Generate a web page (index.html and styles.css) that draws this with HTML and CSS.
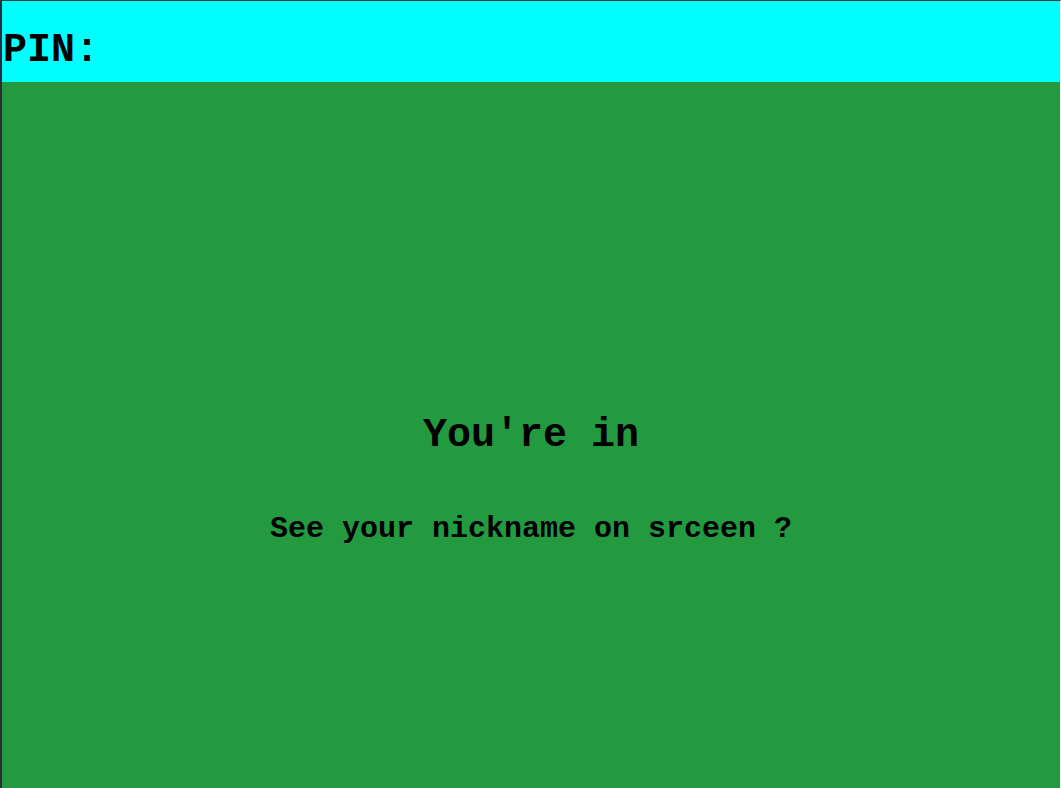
FILE: index.html
```html
<!DOCTYPE html>
<html>
<head>
<meta charset="utf-8">
<link rel="stylesheet" href="styles.css">
</head>
<body>
<div class="frame">
  <header class="pin-bar">
    <span class="pin-label">PIN:</span>
  </header>
  <main class="stage">
    <h1 class="title">You're in</h1>
    <p class="subtitle">See your nickname on srceen ?</p>
  </main>
</div>
</body>
</html>
```

FILE: styles.css
```css
html, body {
  margin: 0;
  padding: 0;
  height: 100%;
}
body {
  font-family: "Liberation Mono", "Courier New", monospace;
  font-weight: bold;
  color: #000;
  background: #249a40;
}
.frame {
  box-sizing: border-box;
  height: 788px;
  display: flex;
  flex-direction: column;
  border-top: 1px solid #3a3a3a;
  border-left: 2px solid #2b2d3a;
  border-right: 1px solid #eef2ee;
}
.pin-bar {
  box-sizing: border-box;
  height: 81px;
  background: #00ffff;
  padding-top: 27px;
  padding-left: 1px;
}
.pin-label {
  font-size: 40px;
  line-height: 45px;
  display: block;
}
.stage {
  flex: 1;
  background: #249a40;
  display: flex;
  flex-direction: column;
  align-items: center;
  padding-top: 331px;
}
.title {
  margin: 0;
  font-size: 40px;
  line-height: 45px;
  font-weight: bold;
}
.subtitle {
  margin: 54px 0 0;
  font-size: 30px;
  line-height: 34px;
}
```
